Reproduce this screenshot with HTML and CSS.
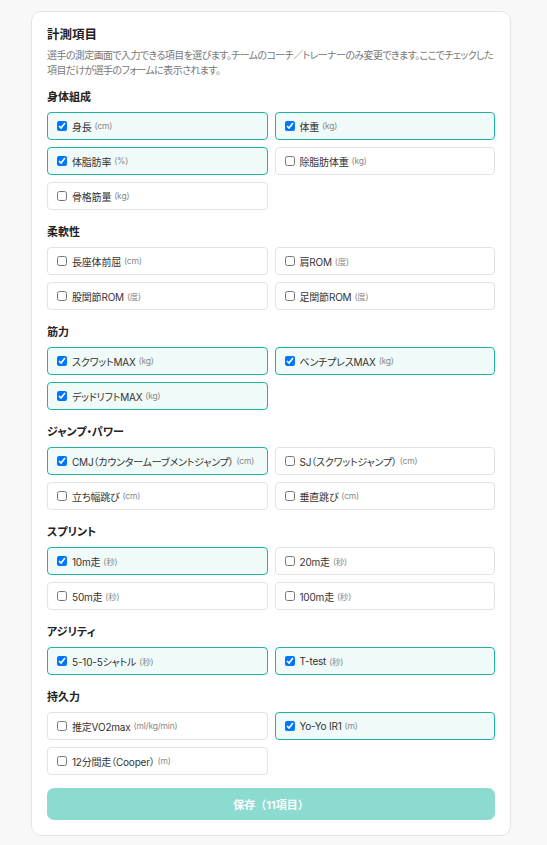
FILE: index.html
```
<!DOCTYPE html>
<html lang="ja">
<head>
    <meta charset="UTF-8">
    <meta name="viewport" content="width=device-width, initial-scale=1.0">
    <title>計測項目</title>
    <link rel="stylesheet" href="styles.css">
</head>
<body>
    <form class="card" id="metricsForm">
        <h1 class="card-title">計測項目</h1>
        <p class="card-desc">選手の測定画面で入力できる項目を選びます。チームのコーチ／トレーナーのみ変更できます。ここでチェックした項目だけが選手のフォームに表示されます。</p>

        <section class="group">
            <h2>身体組成</h2>
            <div class="grid">
                <label class="item"><input type="checkbox" checked>身長<span class="unit">(cm)</span></label>
                <label class="item"><input type="checkbox" checked>体重<span class="unit">(kg)</span></label>
                <label class="item"><input type="checkbox" checked>体脂肪率<span class="unit">(%)</span></label>
                <label class="item"><input type="checkbox">除脂肪体重<span class="unit">(kg)</span></label>
                <label class="item"><input type="checkbox">骨格筋量<span class="unit">(kg)</span></label>
            </div>
        </section>

        <section class="group">
            <h2>柔軟性</h2>
            <div class="grid">
                <label class="item"><input type="checkbox">長座体前屈<span class="unit">(cm)</span></label>
                <label class="item"><input type="checkbox">肩ROM<span class="unit">(度)</span></label>
                <label class="item"><input type="checkbox">股関節ROM<span class="unit">(度)</span></label>
                <label class="item"><input type="checkbox">足関節ROM<span class="unit">(度)</span></label>
            </div>
        </section>

        <section class="group">
            <h2>筋力</h2>
            <div class="grid">
                <label class="item"><input type="checkbox" checked>スクワットMAX<span class="unit">(kg)</span></label>
                <label class="item"><input type="checkbox" checked>ベンチプレスMAX<span class="unit">(kg)</span></label>
                <label class="item"><input type="checkbox" checked>デッドリフトMAX<span class="unit">(kg)</span></label>
            </div>
        </section>

        <section class="group">
            <h2>ジャンプ・パワー</h2>
            <div class="grid">
                <label class="item"><input type="checkbox" checked>CMJ（カウンタームーブメントジャンプ）<span class="unit">(cm)</span></label>
                <label class="item"><input type="checkbox">SJ（スクワットジャンプ）<span class="unit">(cm)</span></label>
                <label class="item"><input type="checkbox">立ち幅跳び<span class="unit">(cm)</span></label>
                <label class="item"><input type="checkbox">垂直跳び<span class="unit">(cm)</span></label>
            </div>
        </section>

        <section class="group">
            <h2>スプリント</h2>
            <div class="grid">
                <label class="item"><input type="checkbox" checked>10m走<span class="unit">(秒)</span></label>
                <label class="item"><input type="checkbox">20m走<span class="unit">(秒)</span></label>
                <label class="item"><input type="checkbox">50m走<span class="unit">(秒)</span></label>
                <label class="item"><input type="checkbox">100m走<span class="unit">(秒)</span></label>
            </div>
        </section>

        <section class="group">
            <h2>アジリティ</h2>
            <div class="grid">
                <label class="item"><input type="checkbox" checked>5-10-5シャトル<span class="unit">(秒)</span></label>
                <label class="item"><input type="checkbox" checked>T-test<span class="unit">(秒)</span></label>
            </div>
        </section>

        <section class="group">
            <h2>持久力</h2>
            <div class="grid">
                <label class="item"><input type="checkbox">推定VO2max<span class="unit">(ml/kg/min)</span></label>
                <label class="item"><input type="checkbox" checked>Yo-Yo IR1<span class="unit">(m)</span></label>
                <label class="item"><input type="checkbox">12分間走（Cooper）<span class="unit">(m)</span></label>
            </div>
        </section>

        <button type="button" class="save" id="saveBtn" disabled>保存（11項目）</button>
    </form>

    <script>
        // チェック状態に合わせて枠の色と保存ボタンの件数を更新する
        const form = document.getElementById('metricsForm');
        const saveBtn = document.getElementById('saveBtn');

        function refresh() {
            const boxes = form.querySelectorAll('.item input');
            let count = 0;
            boxes.forEach(function (box) {
                box.parentElement.classList.toggle('checked', box.checked);
                if (box.checked) count++;
            });
            saveBtn.textContent = '保存（' + count + '項目）';
        }

        form.addEventListener('change', function () {
            refresh();
            saveBtn.disabled = false;
        });
        refresh();
    </script>
</body>
</html>
```

FILE: styles.css
```
body {
    font-family: "Inter", "Noto Sans CJK JP", sans-serif;
    font-feature-settings: "palt";
    background-color: #f8f8f8;
    color: #222;
    margin: 0;
    padding: 11px 36px 10px 31px;
}
.card {
    background: #fff;
    border: 1px solid #e4e4e4;
    border-radius: 10px;
    padding: 14px 15px 15px;
}
.card-title {
    font-size: 12.5px;
    font-weight: 700;
    line-height: 18px;
    margin: 0 0 4px;
}
.card-desc {
    font-size: 10px;
    letter-spacing: -0.6px;
    line-height: 15px;
    color: #777;
    margin: 0 0 11px;
}
.group {
    margin-bottom: 14px;
}
.group h2 {
    font-size: 11px;
    font-weight: 700;
    line-height: 16px;
    margin: 0 0 7px;
}
.grid {
    display: grid;
    grid-template-columns: minmax(0, 1fr) minmax(0, 1fr);
    gap: 7px;
}
.item {
    display: flex;
    align-items: center;
    height: 28px;
    box-sizing: border-box;
    border: 1px solid #e2e2e2;
    border-radius: 4px;
    padding: 0 9px;
    font-size: 10px;
    letter-spacing: -0.2px;
    color: #333;
    white-space: nowrap;
    overflow: hidden;
    cursor: pointer;
}
.item.checked {
    border-color: #22b39f;
    background: #f0faf8;
}
.item input {
    width: 10px;
    height: 10px;
    margin: 0 5px 0 0;
    flex: none;
}
.unit {
    font-size: 8.5px;
    color: #888;
    margin-left: 3px;
}
.save {
    display: block;
    width: 100%;
    height: 32px;
    margin-top: -1px;
    border: none;
    border-radius: 7px;
    background: #8cdbd0;
    color: #fff;
    font-family: inherit;
    font-size: 11px;
    font-weight: 700;
}
```
